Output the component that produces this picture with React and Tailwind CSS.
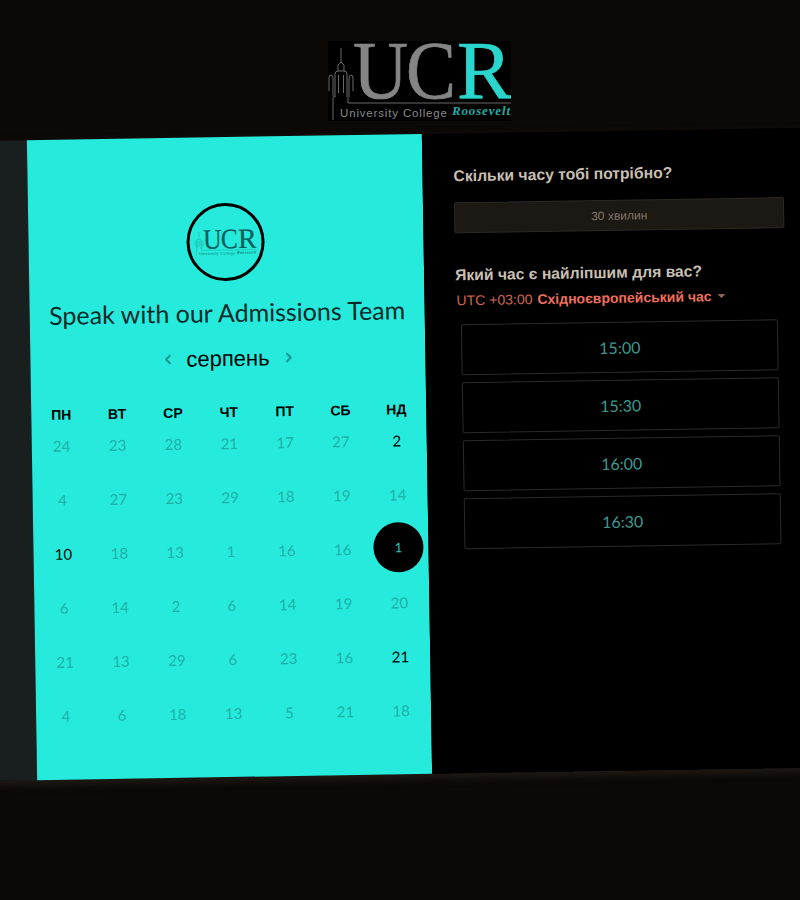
import React from "react";
import { ChevronLeft, ChevronRight } from "lucide-react";

const weekdays = ["ПН", "ВТ", "СР", "ЧТ", "ПТ", "СБ", "НД"];

// active: black number, selected: black circle
const days = [
  [24, 23, 28, 21, 17, 27, { n: 2, active: true }],
  [4, 27, 23, 29, 18, 19, 14],
  [{ n: 10, active: true }, 18, 13, 1, 16, 16, { n: 1, selected: true }],
  [6, 14, 2, 6, 14, 19, 20],
  [21, 13, 29, 6, 23, 16, { n: 21, active: true }],
  [4, 6, 18, 13, 5, 21, 18],
];

const slots = ["15:00", "15:30", "16:00", "16:30"];

function Logo({ className, main, accent, tower, sub, showBg }) {
  return (
    <svg viewBox="0 0 183 80" className={className}>
      {showBg && <rect width="183" height="80" fill="#000" />}
      <g fill="none" stroke={tower} strokeWidth="1">
        <path d="M13 7v14M10 30v-6l3-3 3 3v6" />
        <path d="M7 56V33q0-3 3-3h6q3 0 3 3v23" />
        <path d="M10.5 52V34M15.5 52V34" />
        <path d="M1 50V37q0-3 2-3t2 3v17q0 2 2 2M25 50V37q0-3-2-3t-2 3v19" />
        <path d="M5 56v23M20 56v6h163" />
      </g>
      <g fontFamily="'Liberation Serif', serif" fontSize="83" strokeWidth="0.7">
        <text x="25" y="57" fill={main} stroke={main} textLength="55" lengthAdjust="spacingAndGlyphs">U</text>
        <text x="78" y="57" fill={main} stroke={main} textLength="50" lengthAdjust="spacingAndGlyphs">C</text>
        <text x="129" y="57" fill={accent} stroke={accent} textLength="55" lengthAdjust="spacingAndGlyphs">R</text>
      </g>
      <text x="12" y="76" fill={sub} fontFamily="'Liberation Sans', sans-serif" fontSize="11.5" textLength="107">
        University College
      </text>
      <text x="124" y="74" fill={accent} fontFamily="'Liberation Serif', serif" fontSize="13" fontStyle="italic" fontWeight="700" textLength="58" opacity="0.8">
        Roosevelt
      </text>
    </svg>
  );
}

function DayCell({ day }) {
  const n = typeof day === "object" ? day.n : day;
  if (day.selected) {
    return (
      <div className="relative h-[54px] pt-[2px] text-center leading-5">
        <span className="absolute left-1/2 top-[11px] flex size-[50px] -translate-x-1/2 -translate-y-1/2 items-center justify-center rounded-full bg-black text-[13px] text-[#24c9bd]">
          {n}
        </span>
      </div>
    );
  }
  return (
    <div className={`h-[54px] pt-[2px] text-center text-[15px] leading-5 ${day.active ? "text-black" : "text-[#1fb0a8]"}`}>
      {n}
    </div>
  );
}

export default function App() {
  return (
    <div className="h-[900px] w-[800px] overflow-hidden bg-[#0c0806] font-['Lato',sans-serif]">
      <header className="flex h-[137px] justify-center pl-[38px] pt-[41px]">
        <Logo className="h-[80px] w-[183px]" main="#858585" accent="#2ad6cc" tower="#6a6a6a" sub="#8a8a8a" showBg />
      </header>

      {/* the whole booking card sits slightly tilted */}
      <div className="ml-[-20px] flex h-[640px] w-[860px] origin-[250px_320px] rotate-[-0.92deg] shadow-[0_4px_10px_rgba(70,60,50,0.4)]">
        <div className="w-[52px] bg-[#191e1f]" />

        <section className="w-[395px] bg-[#26ebdc]">
          <div className="ml-[158px] mt-[66px] flex size-[78px] items-center justify-center rounded-full border-[3px] border-black">
            <Logo className="h-[27px] w-[62px] shrink-0" main="#0b5d5b" accent="#0b5d5b" tower="#1a9a92" sub="#127a74" />
          </div>
          <h1 className="mt-[15px] text-center text-[25px] leading-8 text-[#0a2a2a]">Speak with our Admissions Team</h1>

          <div className="mt-[14px] flex h-8 items-center justify-center gap-[8px] font-['Liberation_Sans',sans-serif] text-[22px] text-black">
            <ChevronLeft size={15} strokeWidth={3.5} className="text-[#149a94]" />
            <span className="w-[90px] text-center">серпень</span>
            <ChevronRight size={15} strokeWidth={3.5} className="text-[#149a94]" />
          </div>

          <div className="ml-[2px] mt-[28px] grid h-5 w-[391px] grid-cols-7 items-center text-center font-['Liberation_Sans',sans-serif] text-sm font-bold text-black">
            {weekdays.map((d) => (
              <div key={d}>{d}</div>
            ))}
          </div>

          <div className="ml-[2px] mt-[9px] grid w-[391px] grid-cols-7">
            {days.flat().map((day, i) => (
              <DayCell key={i} day={day} />
            ))}
          </div>
        </section>

        <section className="flex-1 bg-black pl-[31px] pt-[33px] font-['Liberation_Sans',sans-serif]">
          <h2 className="text-[15.7px] font-bold leading-5 text-[#c9bfb2]">Скільки часу тобі потрібно?</h2>
          <div className="mt-[16px] flex h-[31px] w-[330px] items-center justify-center rounded-[2px] border border-[#2d2a24] bg-[#1c1813] text-xs text-[#80776b]">
            30 хвилин
          </div>

          <h2 className="mt-[32px] text-[15.7px] font-bold leading-5 text-[#c9bfb2]">Який час є найліпшим для вас?</h2>
          <div className="ml-[1px] mt-[5px] flex h-5 items-center text-[14px] text-[#d4644f]">
            UTC +03:00
            <span className="ml-[5px] font-bold text-[#ee6f5b]">Східноєвропейський час</span>
            <span className="ml-[6px] h-0 w-0 border-x-4 border-t-4 border-x-transparent border-t-[#8a6a60]" />
          </div>

          <div className="ml-[5px] mt-[14px] flex w-[317px] flex-col gap-[7px]">
            {slots.map((s) => (
              <div key={s} className="flex h-[51px] items-center justify-center rounded-[2px] border border-[#2b2b2b] font-['Lato',sans-serif] text-[16px] text-[#3a9a90]">
                {s}
              </div>
            ))}
          </div>
        </section>
      </div>
    </div>
  );
}
